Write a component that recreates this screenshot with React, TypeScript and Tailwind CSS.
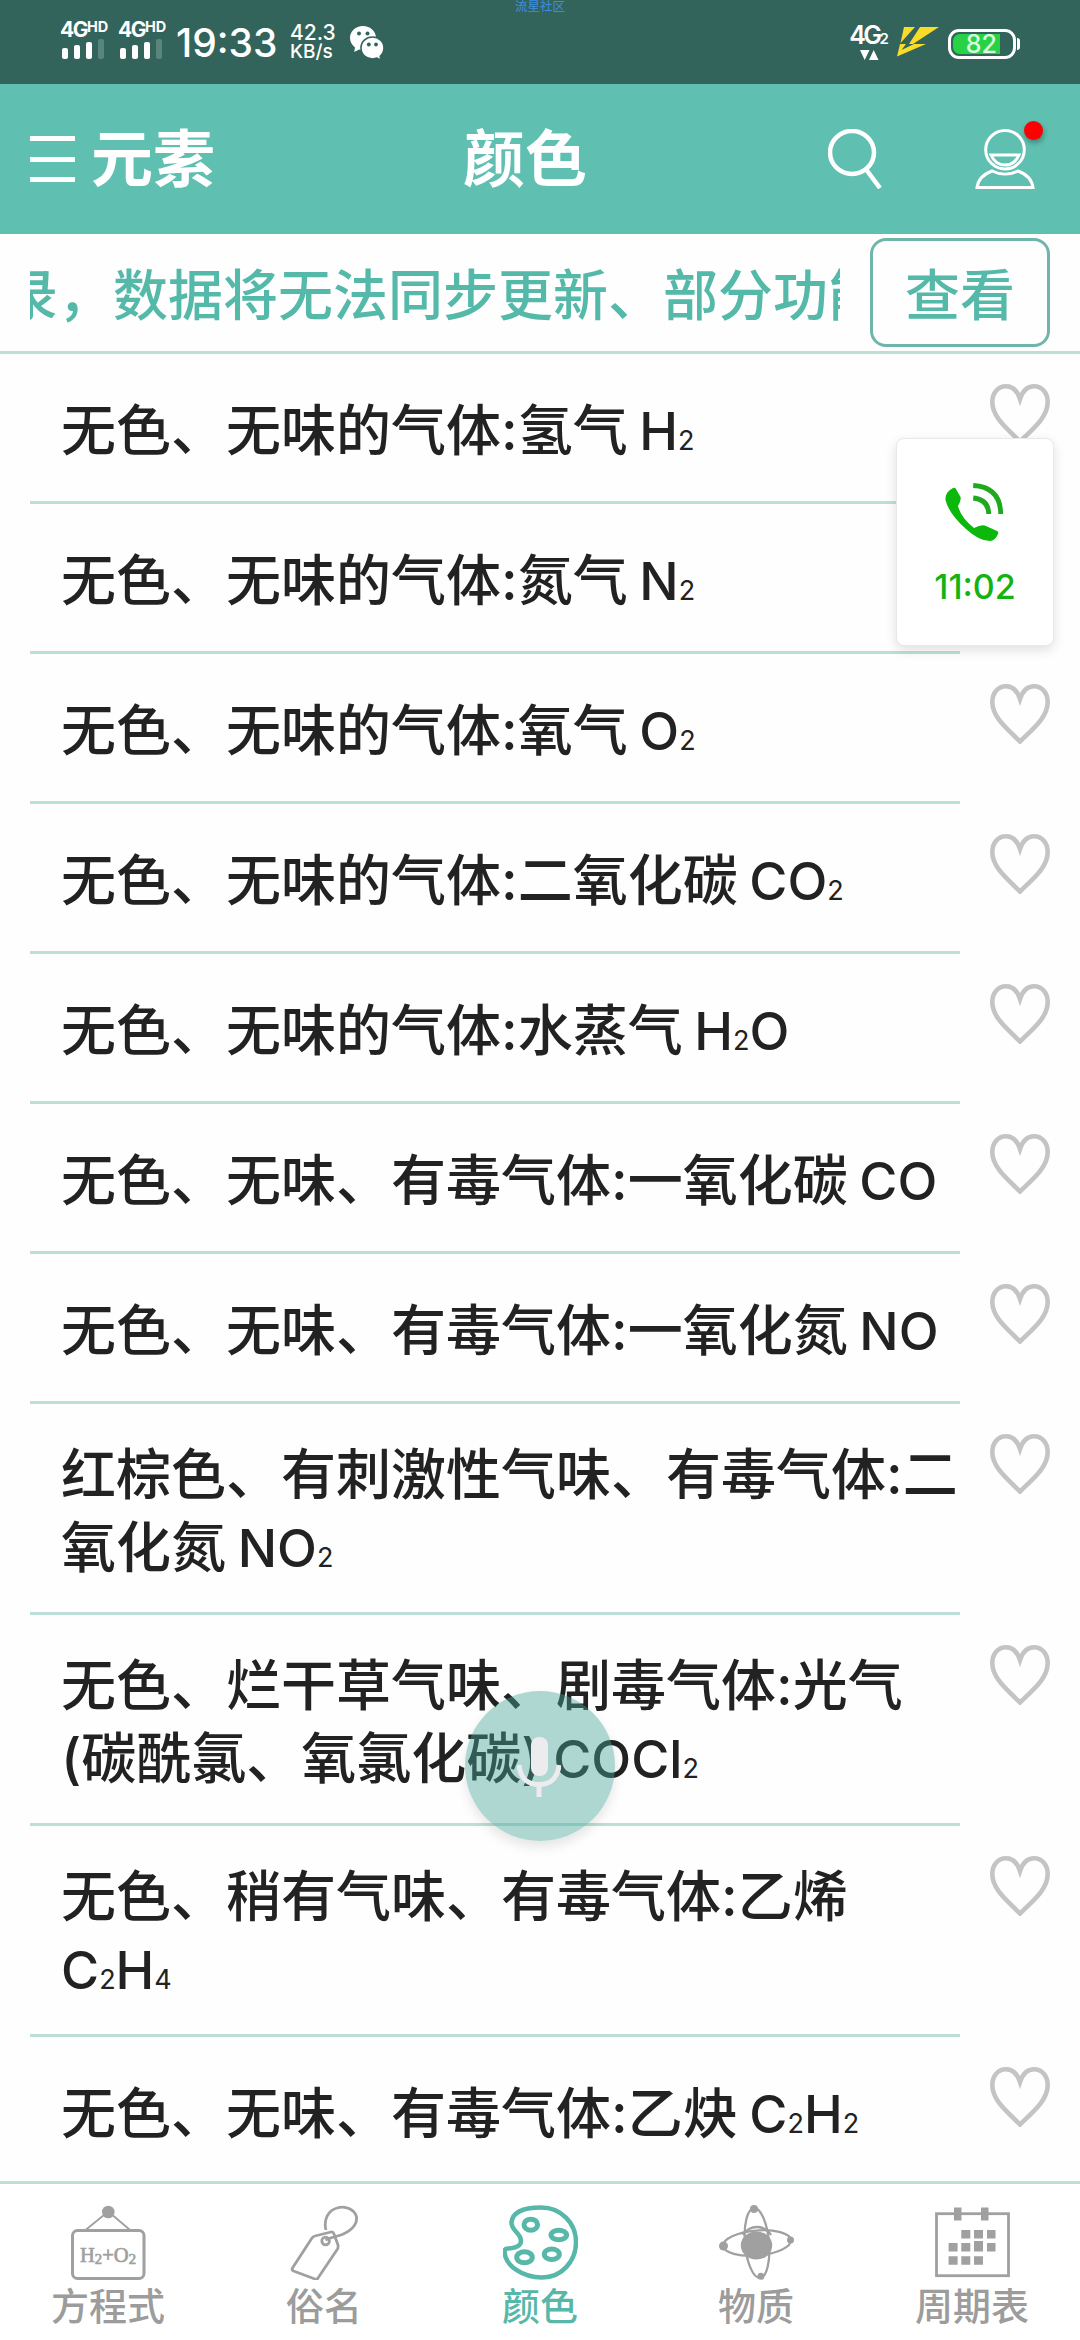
import type { ReactNode } from "react";

type Item = { text: ReactNode };

const Sub = ({ children }: { children: ReactNode }) => (
  <span className="text-[27px] leading-none font-normal">{children}</span>
);

const Formula = ({ children }: { children: ReactNode }) => (
  <span className="text-[52px] leading-none">{children}</span>
);

const items: Item[] = [
  { text: <>无色、无味的气体:氢气 <Formula>H<Sub>2</Sub></Formula></> },
  { text: <>无色、无味的气体:氮气 <Formula>N<Sub>2</Sub></Formula></> },
  { text: <>无色、无味的气体:氧气 <Formula>O<Sub>2</Sub></Formula></> },
  { text: <>无色、无味的气体:二氧化碳 <Formula>CO<Sub>2</Sub></Formula></> },
  { text: <>无色、无味的气体:水蒸气 <Formula>H<Sub>2</Sub>O</Formula></> },
  { text: <>无色、无味、有毒气体:一氧化碳 <Formula>CO</Formula></> },
  { text: <>无色、无味、有毒气体:一氧化氮 <Formula>NO</Formula></> },
  { text: <>红棕色、有刺激性气味、有毒气体:二<br />氧化氮 <Formula>NO<Sub>2</Sub></Formula></> },
  { text: <>无色、烂干草气味、剧毒气体:光气<br />(碳酰氯、氧氯化碳) <Formula>COCl<Sub>2</Sub></Formula></> },
  { text: <>无色、稍有气味、有毒气体:乙烯<br /><Formula>C<Sub>2</Sub>H<Sub>4</Sub></Formula></> },
  { text: <>无色、无味、有毒气体:乙炔 <Formula>C<Sub>2</Sub>H<Sub>2</Sub></Formula></> },
];

const Signal = () => (
  <div className="w-[47px] h-[37px] flex flex-col justify-between">
    <div className="flex items-start font-bold leading-none whitespace-nowrap">
      <span className="text-[21px] leading-[15px] tracking-[-1.500px]">4G</span>
      <span className="text-[14.500px] leading-[10px]">HD</span>
    </div>
    <div className="flex items-end gap-[6px] pl-[2px]">
      <i className="w-[6px] h-[11px] rounded-[2px] bg-white" />
      <i className="w-[6px] h-[14px] rounded-[2px] bg-white" />
      <i className="w-[6px] h-[17px] rounded-[2px] bg-white" />
      <i className="w-[6px] h-[20px] rounded-[2px] bg-[#5a857c]" />
    </div>
  </div>
);

const WeChat = () => (
  <svg className="w-[34px] h-[34px]" viewBox="0 0 34 34" fill="#fff">
    <path d="M13 0C5.600 0 0 5.200 0 12c0 4 2 7.200 5 9.400L4.200 26l5-2.600c1.200.4 2.500.6 3.800.6 7.300 0 13-5.200 13-12S20.300 0 13 0z" />
    <path d="M22.500 11C16 11 11 15.700 11 22s5 11 11.500 11c1.600 0 3.200-.3 4.500-.9l4 2-.8-3.800c2.300-2 3.800-5 3.800-8.300 0-6.300-5-11-11.500-11z" stroke="#33645b" strokeWidth="1.600" />
    <g fill="#33645b">
      <circle cx="9" cy="7.500" r="2" />
      <circle cx="17.500" cy="7.500" r="2" />
      <circle cx="18.800" cy="18.500" r="1.900" />
      <circle cx="26" cy="18.500" r="1.900" />
    </g>
  </svg>
);

const StatusBar = () => (
  <div className="relative h-[84px] bg-[#33645b] text-white flex items-start pl-[60px] pr-[60px]">
    <div className="absolute top-0 left-1/2 -translate-x-1/2 text-[12.500px] leading-[14px] text-[#3f8de0] whitespace-nowrap">
      流星社区
    </div>
    <div className="flex pt-[22px] gap-[11px]">
      <Signal />
      <Signal />
    </div>
    <div className="ml-[11px] mt-[22px] w-[102px] text-[39px] leading-[42px] font-medium whitespace-nowrap">
      19:33
    </div>
    <div className="ml-[12px] mt-[23px] w-[46px] text-[21px] leading-[19px] font-medium whitespace-nowrap">
      <div>42.3</div>
      <div className="text-[19px]">KB/s</div>
    </div>
    <div className="ml-[14px] mt-[26px]">
      <WeChat />
    </div>
    <div className="ml-auto flex">
      <div className="mt-[25px] w-[34px] h-[36px] flex flex-col items-center">
        <div className="text-[25px] leading-[20px] font-semibold tracking-[-2.500px] whitespace-nowrap">
          4G<span className="text-[15px] leading-none tracking-normal">2</span>
        </div>
        <svg className="mt-1 w-[19px] h-[10px] shrink-0" viewBox="0 0 19 10" fill="#fff">
          <path d="M0 0h9.500L4.700 10zM9 10h9.500L13.700 0z" />
        </svg>
      </div>
      <svg className="ml-[11px] mt-[27px] w-[42px] h-[30px]" viewBox="0 0 42 30" fill="#f8dc28">
        <path d="M7 0h11L3.500 16zM23 0h19L16 17h13L0 29.500 3 17h6L4.500 23 17 17h-5z" />
      </svg>
      <div className="ml-[9px] mt-[27px] flex items-center">
        <div className="w-[68px] h-[30px] rounded-[11px] border-[3px] border-white p-[2px]">
          <div className="w-[47px] h-[20px] rounded-l-[7px] bg-[#27d344] text-[#d9ffe0] text-[25px] leading-[20px] font-medium text-right pr-[3px]">
            82
          </div>
        </div>
        <div className="ml-px w-[3px] h-[12px] rounded-r-full bg-white" />
      </div>
    </div>
  </div>
);

const Header = () => (
  <header className="h-[150px] bg-[#5fbfb0] text-white flex items-center pl-[30px] pr-[45px] font-bold text-[62px] leading-[60px]">
    <svg className="w-[45px] h-[46px]" viewBox="0 0 45 46" fill="#fff">
      <path d="M0 0h45v5H0zM0 21h45v5H0zM0 41h45v5H0z" />
    </svg>
    <span className="ml-[16px] mt-[2px]">元素</span>
    <span className="ml-[248px] mt-[2px]">颜色</span>
    <svg className="ml-auto w-[55px] h-[60px]" viewBox="0 0 55 60" fill="none" stroke="#fff" strokeWidth="4.500">
      <ellipse cx="24" cy="23.500" rx="22" ry="21.500" />
      <path d="M38.500 41 52 59" />
    </svg>
    <div className="relative ml-[92px]">
      <svg className="w-[60px] h-[60px]" viewBox="0 0 60 60" fill="none" stroke="#fff" strokeWidth="3">
        <ellipse cx="30" cy="20.700" rx="19.300" ry="19.200" />
        <path d="M16 26h28c-3 7-8 10-14 10s-11-3-14-10zM17 42C9 45 3 51 2 58.500h56C57 51 51 45 43 42c-8 4-18 4-26 0z" />
      </svg>
      <i className="absolute -top-2 left-[49px] w-[19px] h-[19px] rounded-full bg-[#fe0000] shadow-[1px_3px_5px_rgba(0,0,0,0.3)]" />
    </div>
  </header>
);

const Notice = () => (
  <div className="h-[120px] border-b-[3px] border-[#bbdfd7] flex items-center pl-[30px] pr-[30px] text-[#55b9aa] text-[55px] font-medium">
    <div className="w-[810px] overflow-hidden whitespace-nowrap pt-[5px]">
      <div className="-ml-[27px]">录，数据将无法同步更新、部分功能</div>
    </div>
    <button className="ml-[30px] w-[180px] h-[109px] rounded-[16px] border-[3px] border-[#6fb5a9] pt-[5px] whitespace-nowrap">
      查看
    </button>
  </div>
);

const Heart = () => (
  <svg className="w-[60px] h-[60px] shrink-0" viewBox="0 0 60 60" fill="none" stroke="#c4c4c4" strokeWidth="4.600">
    <path d="M30 15C27 6 21.500 2.300 16 2.300 8 2.300 2.300 9 2.300 18c0 15 14 26 27.700 39.500C44 44 57.700 33 57.700 18 57.700 9 52 2.300 44 2.300 38.500 2.300 33 6 30 15z" />
  </svg>
);

const Row = ({ item }: { item: Item }) => (
  <li className="flex justify-between items-start shrink-0 pl-[30px] pr-[30px]">
    <div className="w-[930px] min-h-[150px] pl-[31px] pt-[34px] pb-[28px] border-b-[3px] border-[#bbdfd7] flex items-center">
      <div className="text-[55px] leading-[73px] [word-spacing:-3px] font-medium text-[#222] whitespace-nowrap">
        {item.text}
      </div>
    </div>
    <div className="mt-[30px]">
      <Heart />
    </div>
  </li>
);

const BoardIcon = () => (
  <svg className="w-[75px] h-[75px]" viewBox="0 0 75 75" fill="none" stroke="#a0a0a0">
    <circle cx="37.300" cy="7" r="6.300" fill="#a0a0a0" stroke="none" />
    <path d="M33 10 14.500 25M42 10.500 59 25" strokeWidth="1.800" />
    <rect x="1.500" y="25.500" width="71.500" height="48" rx="5" strokeWidth="3" />
    <text x="9" y="57" fill="#a0a0a0" strokeWidth="0.700" fontFamily="Liberation Serif, serif" fontSize="21" textLength="56" lengthAdjust="spacingAndGlyphs">
      H<tspan fontSize="15" dy="2">2</tspan><tspan dy="-2">+O</tspan><tspan fontSize="15" dy="2">2</tspan>
    </text>
  </svg>
);

const TagIcon = () => (
  <svg className="w-[75px] h-[75px]" viewBox="0 0 75 75" fill="none" stroke="#a0a0a0" strokeWidth="2.800" strokeLinejoin="round">
    <path d="M28 31 44 27q2-.5 3 2l4 11q.5 2-.5 4L31 73q-1 2-3 1L6.500 66q-2-1-1-3L25 33q1-1.500 3-2z" />
    <circle cx="38.600" cy="36" r="3.800" />
    <path d="M39 25C36 14 42 5 50 3c9-3 18 2 19.500 9 1 9-8 16-19 19-4 1-8 2-12 4" />
  </svg>
);

const PaletteIcon = () => (
  <svg className="w-[75px] h-[75px]" viewBox="0 0 75 75" fill="none" stroke="#57b8a9">
    <path d="M5 43.500C16 43 20 39 17 32 14 26 8 24 8.500 17 10 6 22 2.500 38 2.500 58 2.500 73 18 73 37S59 72.500 39 72.500C20 72.500 2 61 1.500 46.500Q1.500 43.500 5 43.500z" strokeWidth="4.500" />
    <g strokeWidth="5">
      <ellipse cx="27.800" cy="19.700" rx="6.800" ry="5.500" />
      <ellipse cx="55.800" cy="30" rx="7.800" ry="4.800" />
      <ellipse cx="21.500" cy="52.300" rx="7.800" ry="5.500" />
      <ellipse cx="48.800" cy="49.300" rx="7.500" ry="5.300" />
    </g>
  </svg>
);

const AtomIcon = () => (
  <svg className="w-[75px] h-[75px]" viewBox="0 0 75 75" fill="none" stroke="#a0a0a0" strokeWidth="2.300">
    <ellipse cx="38" cy="38" rx="34" ry="12.500" transform="rotate(-5 38 38)" />
    <ellipse cx="38" cy="38" rx="12" ry="35" transform="rotate(-5 38 38)" />
    <path d="M24 30q5-8 14-8t14 8" />
    <g fill="#a0a0a0" stroke="none">
      <ellipse cx="37.500" cy="40.500" rx="15.700" ry="14" />
      <circle cx="35" cy="4" r="4" />
      <circle cx="4.500" cy="41" r="4.500" />
      <circle cx="71.500" cy="35" r="3.500" />
      <circle cx="41.900" cy="71.300" r="3.500" />
    </g>
  </svg>
);

const CalendarIcon = () => (
  <svg className="w-[75px] h-[75px]" viewBox="0 0 75 75" fill="#a0a0a0">
    <rect x="1.500" y="8.700" width="72" height="62" fill="none" stroke="#a0a0a0" strokeWidth="2.800" />
    <path d="M19 2.500h7.500v13H19zM46 2.500h7.500v13H46z" />
    <path d="M26.300 25h9v8.500h-9zM39 25h9v8.500h-9zM52 25h8.500v8.500H52zM13.600 38h9v8.500h-9zM26.300 38h9v8.500h-9zM39 36h9v10.500h-9zM52 38h8.500v8.500H52zM13.600 51.300h9v8.500h-9zM26.300 51.300h9v8.500h-9zM39 51.300h9v8.500h-9z" />
  </svg>
);

const tabs = [
  { label: "方程式", icon: <BoardIcon /> },
  { label: "俗名", icon: <TagIcon /> },
  { label: "颜色", icon: <PaletteIcon />, active: true },
  { label: "物质", icon: <AtomIcon /> },
  { label: "周期表", icon: <CalendarIcon /> },
];

const TabBar = () => (
  <nav className="h-[159px] shrink-0 border-t-[3px] border-[#bbdfd7] bg-white grid grid-cols-5">
    {tabs.map((tab) => (
      <div
        key={tab.label}
        className={`flex flex-col items-center pt-[21px] text-[38px] leading-[52px] font-medium ${tab.active ? "text-[#57b8a9]" : "text-[#9c9c9c]"}`}
      >
        {tab.icon}
        <span>{tab.label}</span>
      </div>
    ))}
  </nav>
);

const CallWindow = () => (
  <div className="absolute left-[896px] top-[438px] w-[158px] h-[208px] rounded-[8px] border border-[#e8e8e8] bg-white shadow-[0_4px_12px_rgba(0,0,0,0.12)] flex flex-col items-center text-[#13b313]">
    <svg className="mt-[44px] w-[60px] h-[60px]" viewBox="0 0 60 60" fill="#0bb80b">
      <path d="M8 5q2-1 3 1l4.500 8q1 3-2.500 9 3 12 16 22 8-4 12-2l11 5q2 1 1 3-3 7-8 7-11 0-24-12Q4 31 .5 17 0 9 8 5z" />
      <path d="M28.200 2.500Q55.500 4 55.700 31M28.200 15Q43.500 16.500 43.700 31" fill="none" stroke="#1ea91e" strokeWidth="4.800" />
    </svg>
    <span className="mt-[24px] text-[34px] leading-[40px] font-medium">11:02</span>
  </div>
);

const MicButton = () => (
  <div className="absolute left-[465px] top-[1691px] w-[150px] h-[150px] rounded-full bg-[#47a496]/43 shadow-[0_6px_12px_rgba(0,0,0,0.1)]">
    <svg className="absolute left-[52px] top-[45px] w-[44px] h-[62px]" viewBox="0 0 44 62" fill="#ececee">
      <rect x="14" y="1" width="17" height="39" rx="8" />
      <path d="M2 29C3 43 12 48.500 22 48.500S41 43 42 29M22 48v13" fill="none" stroke="#ececee" strokeWidth="5" />
    </svg>
  </div>
);

const App = () => {
  return (
    <div className="relative w-[1080px] h-[2340px] overflow-hidden bg-[#fefefe] flex flex-col font-['Inter','Noto_Sans_CJK_SC',sans-serif]">
      <StatusBar />
      <Header />
      <Notice />
      <ul className="flex-1 min-h-0 overflow-hidden flex flex-col">
        {items.map((item, i) => (
          <Row key={i} item={item} />
        ))}
      </ul>
      <TabBar />
      <CallWindow />
      <MicButton />
    </div>
  );
};

export default App;
